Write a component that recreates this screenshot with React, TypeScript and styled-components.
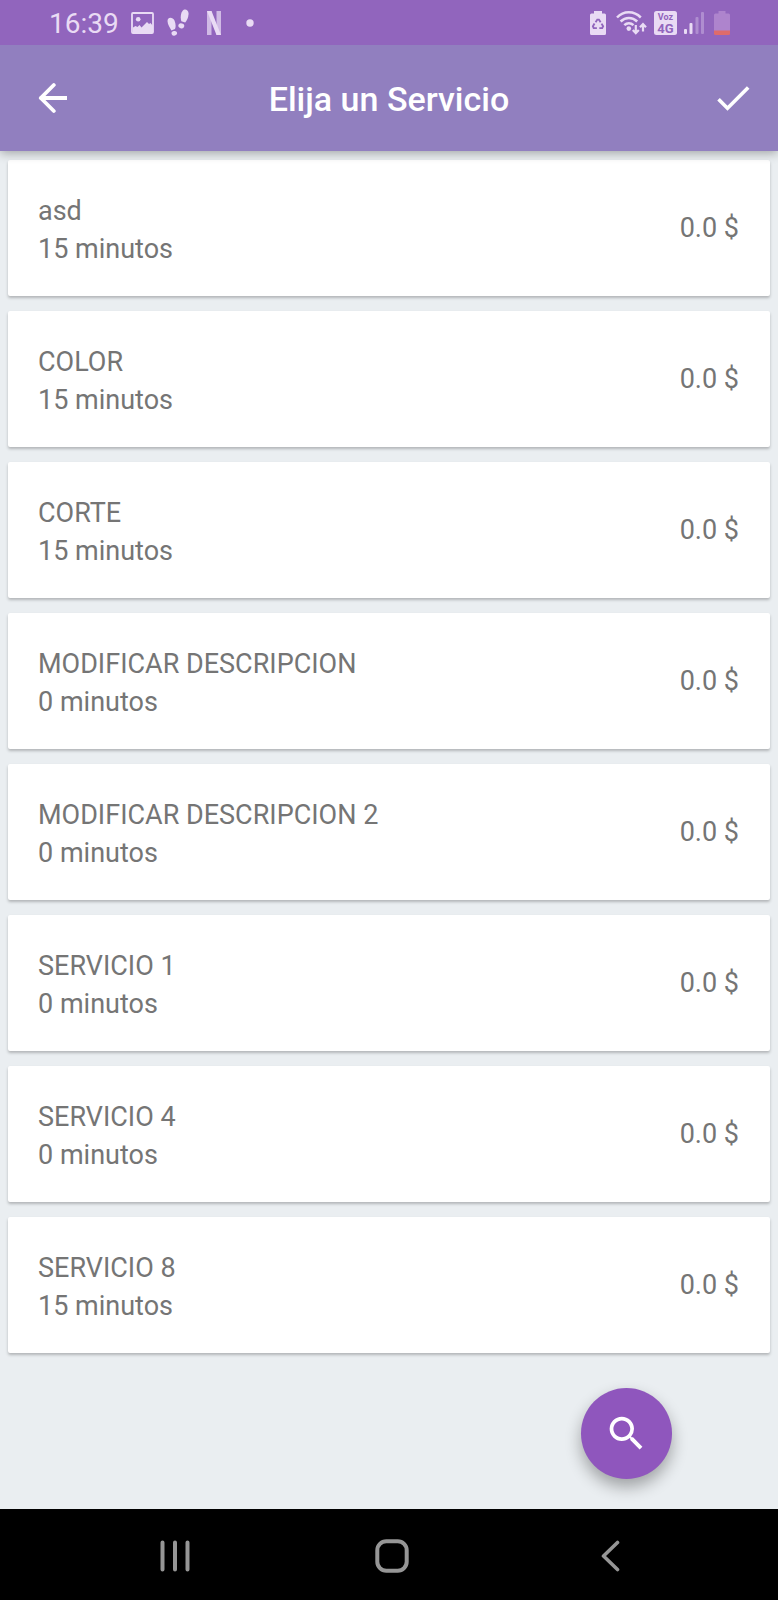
import React from 'react';
import styled, { createGlobalStyle } from 'styled-components';
import { MdCheck, MdSearch } from 'react-icons/md';

const GlobalStyle = createGlobalStyle`
  *, *::before, *::after { box-sizing: border-box; }
  body {
    margin: 0;
    background: #eaeef1;
    font-family: Roboto, "Liberation Sans", sans-serif;
    color: #757575;
  }
  svg { display: block; flex: none; }
`;

const Screen = styled.div`
  min-height: 100vh;
  display: flex;
  flex-direction: column;
`;

const StatusBar = styled.div`
  position: relative;
  z-index: 2;
  height: 45px;
  padding: 0 48px 0 49px;
  display: flex;
  align-items: center;
  justify-content: space-between;
  background: #9165bd;
  color: #e9dbf4;
`;

const StatusGroup = styled.div<{ $gap: number }>`
  display: flex;
  align-items: center;
  gap: ${(p) => p.$gap}px;
`;

const Clock = styled.time`
  font-size: 28px;
  line-height: 32px;
  padding-top: 2px;
`;

const AppBar = styled.header`
  position: relative;
  z-index: 1;
  height: 106px;
  padding: 0 23px;
  display: grid;
  grid-template-columns: 44px 1fr 44px;
  align-items: center;
  background: #917fbf;
  color: #fff;
  box-shadow: 0 2px 10px rgba(0, 0, 0, 0.32);
`;

const Title = styled.h1`
  margin: 0;
  padding-top: 2px;
  font-size: 34px;
  line-height: 40px;
  font-weight: 500;
  text-align: center;
`;

const IconButton = styled.button<{ $align?: string }>`
  width: 44px;
  height: 44px;
  padding: 0;
  border: 0;
  background: none;
  color: inherit;
  display: grid;
  align-items: center;
  justify-items: ${(p) => p.$align || 'center'};
  cursor: pointer;
`;

const Main = styled.main`
  flex: 1;
  display: flex;
  flex-direction: column;
`;

const ServiceList = styled.ul`
  list-style: none;
  margin: 0;
  padding: 9px 8px 0;
  display: flex;
  flex-direction: column;
  gap: 15px;
`;

const ServiceCard = styled.li`
  min-height: 136px;
  padding: 0 31px 0 30px;
  display: flex;
  align-items: center;
  justify-content: space-between;
  gap: 24px;
  background: #fff;
  border-radius: 2px;
  box-shadow: 0 2px 3px rgba(0, 0, 0, 0.24);
  font-size: 27px;
  line-height: 38px;
`;

const ServiceText = styled.div`
  display: flex;
  flex-direction: column;
  padding-top: 4px;
`;

const Price = styled.span`
  white-space: nowrap;
`;

const SearchButton = styled.button`
  width: 91px;
  height: 91px;
  margin: auto 106px 30px auto;
  padding: 0;
  border: 0;
  border-radius: 50%;
  display: grid;
  place-items: center;
  background: #8f56bd;
  color: #fff;
  box-shadow: 0 8px 16px rgba(0, 0, 0, 0.32);
  cursor: pointer;
`;

const NavBar = styled.nav`
  height: 91px;
  padding: 3px 59px 0 66px;
  display: grid;
  grid-template-columns: repeat(3, 1fr);
  align-items: center;
  justify-items: center;
  background: #000;
  color: #969696;
`;

const services = [
  { name: 'asd', minutes: 15 },
  { name: 'COLOR', minutes: 15 },
  { name: 'CORTE', minutes: 15 },
  { name: 'MODIFICAR DESCRIPCION', minutes: 0 },
  { name: 'MODIFICAR DESCRIPCION 2', minutes: 0 },
  { name: 'SERVICIO 1', minutes: 0 },
  { name: 'SERVICIO 4', minutes: 0 },
  { name: 'SERVICIO 8', minutes: 15 },
];

const PictureIcon = () => (
  <svg width="24" height="22" viewBox="0 0 24 22" aria-hidden="true">
    <rect x="1" y="1" width="21" height="20" rx="1" fill="none" stroke="currentColor" strokeWidth="1.800" />
    <circle cx="7.200" cy="7.200" r="2.300" fill="currentColor" />
    <path d="M2 15.500l2.500-1.500 2 1 2-2 2 2.500L16 10l2 2 1.500-1 2.500 3v7H2z" fill="currentColor" />
  </svg>
);

const FootprintsIcon = () => (
  <svg width="22" height="28" viewBox="0 0 22 28" fill="currentColor" aria-hidden="true">
    <path d="M1 10c1.500-2 5-1.500 6.500 1.500 1.300 3 1.500 6.500.5 8.500l-3.600 1.400C3 18.500-.8 14 1 10z" />
    <ellipse cx="7.300" cy="24.300" rx="2.800" ry="2.300" transform="rotate(-15 7.300 24.300)" />
    <path d="M15.500 2c2-2.500 5.600-1.500 6 2 .4 4-1.800 7.500-3.300 9.500l-3.900-1.200C13.300 9 13.600 4.500 15.500 2z" />
    <ellipse cx="14.300" cy="16.800" rx="3" ry="2.500" transform="rotate(20 14.300 16.800)" />
  </svg>
);

const StreamingIcon = () => (
  <svg width="14" height="24" viewBox="0 0 14 24" fill="currentColor" aria-hidden="true">
    <path d="M0 0h4.500v24H0z" opacity="0.72" />
    <path d="M9.500 0H14v24H9.500z" opacity="0.72" />
    <path d="M0 0h4.500L14 24H9.500z" />
  </svg>
);

const DotIcon = () => (
  <svg width="8" height="8" viewBox="0 0 8 8" aria-hidden="true">
    <circle cx="4" cy="4" r="3.700" fill="currentColor" />
  </svg>
);

const RecycleBatteryIcon = () => (
  <svg width="16" height="24" viewBox="0 0 16 24" aria-hidden="true">
    <path d="M4 0h8v2.500h2.500A1.500 1.500 0 0 1 16 4v18.500a1.500 1.500 0 0 1-1.500 1.500h-13A1.500 1.500 0 0 1 0 22.500V4a1.500 1.500 0 0 1 1.500-1.500H4z" fill="currentColor" />
    <g fill="none" stroke="#9165bd" strokeWidth="1.900">
      <path d="M5.600 11.200L7.300 8.600h1.600l1.700 2.600" />
      <path d="M11.600 12.600l1.500 2.600-.9 1.900H9.300" />
      <path d="M6.900 17.100H3.700l-.8-1.900 1.600-2.700" />
    </g>
  </svg>
);

const WifiIcon = () => (
  <svg width="31" height="24" viewBox="0 0 31 24" aria-hidden="true">
    <g fill="none" stroke="currentColor" strokeWidth="2.500">
      <path d="M1 6.500C7.500-.4 18 -.4 24.800 6.500" />
      <path d="M4.600 10.500c4.800-4.800 11.800-4.800 16.600 0" />
      <path d="M8.300 14.200c2.700-2.500 6.500-2.500 9.200 0" />
    </g>
    <circle cx="12.800" cy="17.600" r="2.300" fill="currentColor" />
    <g fill="none" stroke="currentColor" strokeWidth="2.200">
      <path d="M19.800 14v8M16.800 19l3 3.200 3-3.200" />
      <path d="M27 20.500v-7.500M24 16.200l3-3.200 3 3.200" />
    </g>
  </svg>
);

const VoiceIcon = () => (
  <svg width="23" height="24" viewBox="0 0 23 24" aria-hidden="true">
    <rect width="23" height="24" rx="2.500" fill="currentColor" />
    <g fill="#9165bd" fontFamily="Roboto, sans-serif" fontWeight="700" textAnchor="middle">
      <text x="11.500" y="9" fontSize="9">Voz</text>
      <text x="11.500" y="22" fontSize="13">4G</text>
    </g>
  </svg>
);

const SignalIcon = () => (
  <svg width="20" height="22" viewBox="0 0 20 22" fill="currentColor" aria-hidden="true">
    <rect x="0" y="17" width="3" height="5" rx="1" />
    <rect x="5.500" y="11" width="3" height="11" rx="1" />
    <rect x="11.500" y="5" width="3" height="17" rx="1" opacity="0.35" />
    <rect x="17" y="0" width="3" height="22" rx="1" opacity="0.35" />
  </svg>
);

const LowBatteryIcon = () => (
  <svg width="16" height="24" viewBox="0 0 16 24" aria-hidden="true">
    <path d="M4.500 0h7v2.500h3A1.500 1.500 0 0 1 16 4v16H0V4a1.500 1.500 0 0 1 1.500-1.500h3z" fill="#ae84cd" />
    <path d="M0 19.500h16v3a1.500 1.500 0 0 1-1.500 1.500h-13A1.500 1.500 0 0 1 0 22.500z" fill="#de6b6b" />
  </svg>
);

const BackArrowIcon = () => (
  <svg width="32" height="32" viewBox="0 0 32 32" fill="none" stroke="currentColor" strokeWidth="3.800" strokeLinecap="round" strokeLinejoin="round" aria-hidden="true">
    <path d="M18.800 3L5.800 16l13 13M5.800 16H32" />
  </svg>
);

const RecentsIcon = () => (
  <svg width="30" height="32" viewBox="0 0 30 32" fill="none" stroke="currentColor" strokeWidth="4" strokeLinecap="round" aria-hidden="true">
    <path d="M2.500 2.500v27M15 2.500v27M27.500 2.500v27" />
  </svg>
);

const HomeIcon = () => (
  <svg width="34" height="34" viewBox="0 0 34 34" aria-hidden="true">
    <rect x="2.300" y="2.300" width="29.400" height="29.400" rx="9" fill="none" stroke="currentColor" strokeWidth="4" />
  </svg>
);

const ChevronIcon = () => (
  <svg width="20" height="32" viewBox="0 0 20 32" fill="none" stroke="currentColor" strokeWidth="3.600" strokeLinecap="round" strokeLinejoin="round" aria-hidden="true">
    <path d="M17.500 2.500L3.500 16l14 13.500" />
  </svg>
);

export default function App() {
  return (
    <Screen>
      <GlobalStyle />
      <StatusBar>
        <StatusGroup $gap={25}>
          <StatusGroup $gap={18}>
            <StatusGroup $gap={12}>
              <Clock dateTime="16:39">16:39</Clock>
              <PictureIcon />
              <FootprintsIcon />
            </StatusGroup>
            <StreamingIcon />
          </StatusGroup>
          <DotIcon />
        </StatusGroup>
        <StatusGroup $gap={10}>
          <RecycleBatteryIcon />
          <StatusGroup $gap={7}>
            <WifiIcon />
            <VoiceIcon />
            <SignalIcon />
          </StatusGroup>
          <LowBatteryIcon />
        </StatusGroup>
      </StatusBar>
      <AppBar>
        <IconButton type="button" aria-label="Volver" $align="end">
          <BackArrowIcon />
        </IconButton>
        <Title>Elija un Servicio</Title>
        <IconButton type="button" aria-label="Confirmar">
          <MdCheck size={44} />
        </IconButton>
      </AppBar>
      <Main>
        <ServiceList>
          {services.map((service) => (
            <ServiceCard key={service.name}>
              <ServiceText>
                <span>{service.name}</span>
                <span>{service.minutes} minutos</span>
              </ServiceText>
              <Price>0.0 $</Price>
            </ServiceCard>
          ))}
        </ServiceList>
        <SearchButton type="button" aria-label="Buscar">
          <MdSearch size={45} />
        </SearchButton>
      </Main>
      <NavBar aria-label="Sistema">
        <IconButton type="button" aria-label="Recientes">
          <RecentsIcon />
        </IconButton>
        <IconButton type="button" aria-label="Inicio">
          <HomeIcon />
        </IconButton>
        <IconButton type="button" aria-label="Atrás">
          <ChevronIcon />
        </IconButton>
      </NavBar>
    </Screen>
  );
}
